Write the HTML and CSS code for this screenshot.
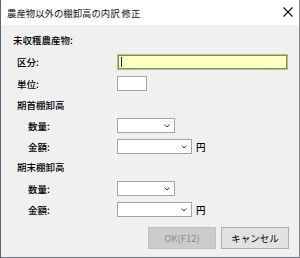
FILE: index.html
```html
<!DOCTYPE html>
<html lang="ja">
<head>
<meta charset="utf-8">
<link rel="stylesheet" href="styles.css">
</head>
<body>
<div class="dialog">
  <div class="titlebar">
    <span class="title">農産物以外の棚卸高の内訳 修正</span>
    <svg class="close" width="10" height="10" viewBox="0 0 10 10"><path d="M0.5 0.5L9.5 9.5M9.5 0.5L0.5 9.5" stroke="#111" stroke-width="1.1" fill="none"/></svg>
  </div>
  <div class="content">
    <div class="heading h1">未収穫農産物:</div>
    <div class="row r-kubun">
      <span class="label l1">区分:</span>
      <span class="field text active"><span class="caret"></span></span>
    </div>
    <div class="row r-tani">
      <span class="label l1">単位:</span>
      <span class="field text small"></span>
    </div>
    <div class="heading h2">期首棚卸高</div>
    <div class="row r-a">
      <span class="label l2">数量:</span>
      <span class="field combo short"><svg class="chev" width="6" height="4" viewBox="0 0 6 4"><path d="M0.5 0.5L3 3L5.5 0.5" stroke="#444" fill="none"/></svg></span>
    </div>
    <div class="row r-b">
      <span class="label l2">金額:</span>
      <span class="field combo long"><svg class="chev" width="6" height="4" viewBox="0 0 6 4"><path d="M0.5 0.5L3 3L5.5 0.5" stroke="#444" fill="none"/></svg></span>
      <span class="unit">円</span>
    </div>
    <div class="heading h3">期末棚卸高</div>
    <div class="row r-c">
      <span class="label l2">数量:</span>
      <span class="field combo short"><svg class="chev" width="6" height="4" viewBox="0 0 6 4"><path d="M0.5 0.5L3 3L5.5 0.5" stroke="#444" fill="none"/></svg></span>
    </div>
    <div class="row r-d">
      <span class="label l2">金額:</span>
      <span class="field combo long"><svg class="chev" width="6" height="4" viewBox="0 0 6 4"><path d="M0.5 0.5L3 3L5.5 0.5" stroke="#444" fill="none"/></svg></span>
      <span class="unit">円</span>
    </div>
    <div class="buttons">
      <span class="btn disabled">OK(F12)</span>
      <span class="btn">キャンセル</span>
    </div>
  </div>
</div>
</body>
</html>
```
FILE: styles.css
```css
html, body {
  margin: 0;
  padding: 0;
  background: #f0f0f0;
}
.dialog {
  width: 300px;
  height: 258px;
  box-sizing: border-box;
  border-left: 1px solid #56657c;
  border-right: 1px solid #858585;
  border-bottom: 1px solid #6f7785;
  background: #f0f0f0;
  font-family: "Noto Sans CJK JP", "Noto Sans", sans-serif;
  font-size: 9.5px;
  font-weight: 500;
  color: #000;
  display: flex;
  flex-direction: column;
}
.titlebar {
  height: 25px;
  background: #fff;
  display: flex;
  align-items: center;
  padding-left: 6px;
  padding-right: 6px;
  padding-top: 1px;
  box-sizing: border-box;
}
.title {
  flex: 1;
  font-size: 9.4px;
  font-weight: 400;
  color: #111;
}
.close {
  display: block;
  margin-top: -3px;
}
.content {
  display: flex;
  flex-direction: column;
}
.heading {
  height: 14px;
  line-height: 14px;
  padding-left: 12px;
}
.h1 { margin-top: 8px; }
.h2 { margin-top: 7px; padding-left: 16px; }
.h3 { margin-top: 6px; padding-left: 16px; }
.row {
  display: flex;
  align-items: center;
}
.label {
  width: 116px;
  box-sizing: border-box;
  line-height: 14px;
}
.l1 { padding-left: 16px; }
.l2 { padding-left: 27px; }
.r-kubun { margin-top: 7px; height: 16px; }
.r-tani { margin-top: 6px; height: 15px; }
.r-a { margin-top: 6px; height: 15px; }
.r-b { margin-top: 6px; height: 15px; }
.r-c { margin-top: 7px; height: 15px; }
.r-d { margin-top: 6px; height: 15px; }
.field {
  display: flex;
  align-items: center;
  justify-content: flex-end;
  box-sizing: border-box;
  background: #fff;
  border: 1px solid #a3a3a3;
  height: 15px;
}
.text.active {
  width: 171px;
  height: 16px;
  background: #ffffc4;
  border: 1px solid #e8bb1a;
  box-shadow: inset 0 0 0 1px #4a90d4;
  justify-content: flex-start;
}
.caret {
  display: block;
  width: 1px;
  height: 10px;
  background: #222;
  margin-left: 3px;
}
.small { width: 30px; }
.combo.short { width: 58px; }
.combo.long { width: 75px; }
.chev {
  display: block;
  margin-right: 4px;
  margin-top: 1px;
}
.unit {
  margin-left: 4px;
  line-height: 14px;
}
.buttons {
  margin-top: 10px;
  display: flex;
  justify-content: flex-end;
  gap: 5px;
  padding-right: 10px;
}
.btn {
  width: 68px;
  height: 22px;
  box-sizing: border-box;
  display: flex;
  align-items: center;
  justify-content: center;
  background: #e1e1e1;
  border: 1px solid #adadad;
  font-size: 9.5px;
  font-weight: 400;
}
.btn.disabled {
  background: #cccccc;
  border-color: #bfbfbf;
  color: #8a8a8a;
}
```
